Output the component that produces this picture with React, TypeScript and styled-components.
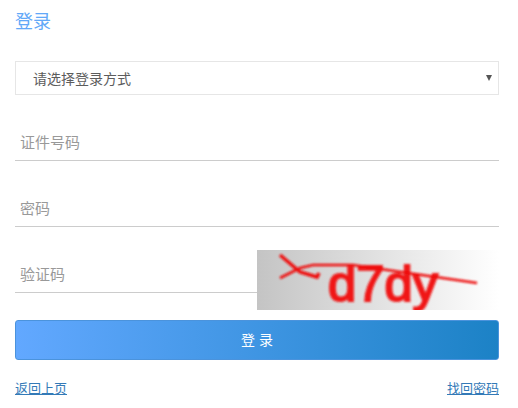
import React from "react";
import styled, { createGlobalStyle } from "styled-components";

const Global = createGlobalStyle`
  html, body { margin: 0; padding: 0; background: #fff; }
  * { box-sizing: border-box; }
  body { font-family: "Noto Sans CJK SC", "Liberation Sans", sans-serif; }
`;

const Page = styled.div`
  width: 518px;
  height: 408px;
  padding: 8px 19px 0 15px;
  overflow: hidden;
`;

const Title = styled.h1`
  margin: 0;
  height: 24px;
  font-size: 18px;
  line-height: 24px;
  font-weight: 400;
  color: #62a8f8;
`;

const SelectBox = styled.div`
  position: relative;
  margin-top: 29px;
  height: 34px;
  border: 1px solid #e6e6e6;
  padding-left: 17px;
  font-size: 14px;
  line-height: 32px;
  color: #5c5c5c;
  &::after {
    content: "";
    position: absolute;
    right: 6px;
    top: 13px;
    border-left: 3px solid transparent;
    border-right: 3px solid transparent;
    border-top: 6px solid #555;
  }
`;

const Field = styled.input`
  display: block;
  width: ${(p) => (p.$short ? "242px" : "100%")};
  height: 35px;
  margin-top: ${(p) => p.$top}px;
  padding: 0 5px 4px;
  border: 0;
  border-bottom: 1px solid #ccc;
  outline: none;
  background: transparent;
  font: 400 15px "Noto Sans CJK SC", sans-serif;
  &::placeholder { color: #999; opacity: 1; }
`;

const CaptchaRow = styled.div`
  display: flex;
  align-items: flex-start;
  height: 60px;
  margin-top: 23px;
`;

const Captcha = styled.svg`
  display: block;
  width: 242px;
  height: 60px;
  flex: none;
`;

const Submit = styled.button`
  display: block;
  width: 100%;
  height: 40px;
  margin-top: 10px;
  border: 1px solid #4b93dc;
  border-radius: 3px;
  background: linear-gradient(to right, #62a8ff, #1c82c6);
  color: #fff;
  font: 400 14px "Noto Sans CJK SC", sans-serif;
  letter-spacing: 4px;
  padding: 0 0 2px 4px;
`;

const Links = styled.div`
  display: flex;
  justify-content: space-between;
  margin-top: 18px;
`;

const LinkText = styled.a`
  font-size: 13px;
  line-height: 20px;
  color: #337ab7;
  text-decoration: underline;
`;

export default function App() {
  return (
    <Page>
      <Global />
      <Title>登录</Title>
      <SelectBox>请选择登录方式</SelectBox>
      <Field $top={31} placeholder="证件号码" />
      <Field $top={31} placeholder="密码" />
      <CaptchaRow>
        <Field $top={8} $short placeholder="验证码" />
        <Captcha viewBox="0 0 242 60" aria-label="验证码图片">
          <defs>
            <linearGradient id="captchaBg" x1="0" x2="1" y1="0" y2="0">
              <stop offset="0" stopColor="#c4c4c4" />
              <stop offset="1" stopColor="#ffffff" />
            </linearGradient>
            <filter id="soft"><feGaussianBlur stdDeviation="0.8" /></filter>
          </defs>
          <rect width="242" height="60" fill="url(#captchaBg)" />
          <g filter="url(#soft)">
            <text x="71" y="51" fontFamily="Liberation Sans" fontSize="50" fill="#f01414" stroke="#f01414" strokeWidth="2" textLength="110" lengthAdjust="spacingAndGlyphs">d7dy</text>
            <path d="M23 5 L43 22 L60 27 L62 23" fill="none" stroke="#ee1010" strokeWidth="3.6" />
            <path d="M23 28 L43 18 L56 15 L96 15 L220 33" fill="none" stroke="#ee1010" strokeWidth="2.6" />
          </g>
        </Captcha>
      </CaptchaRow>
      <Submit>登录</Submit>
      <Links>
        <LinkText>返回上页</LinkText>
        <LinkText>找回密码</LinkText>
      </Links>
    </Page>
  );
}
